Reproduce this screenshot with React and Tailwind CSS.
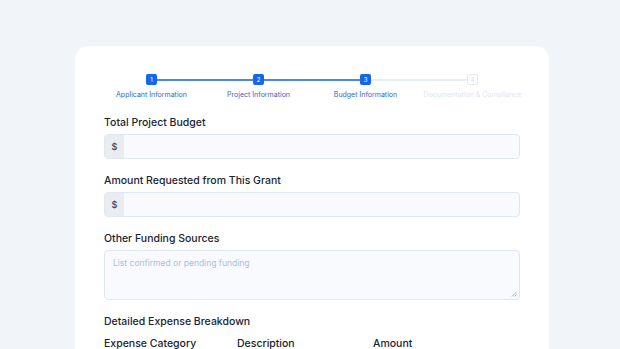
import React from "react";

const steps = [
  { n: 1, label: "Applicant Information", done: true },
  { n: 2, label: "Project Information", done: true },
  { n: 3, label: "Budget Information", done: true },
  { n: 4, label: "Documentation & Compliance", done: false },
];

function Stepper() {
  return (
    <div className="grid grid-cols-4 px-[23px]">
      {steps.map((s, i) => {
        const next = steps[i + 1];
        return (
          <div key={s.n} className="relative flex flex-col items-center">
            {next && (
              <div
                className={
                  "absolute left-1/2 top-[5px] h-[2px] w-full " +
                  (next.done ? "bg-[#4b86ea]" : "bg-[#e6edf8]")
                }
              />
            )}
            <div
              className={
                "relative z-10 flex h-[11px] w-[11px] items-center justify-center rounded-[2px] text-[6px] leading-none " +
                (s.done
                  ? "bg-[#1467ea] text-white"
                  : "border border-[#e3e9f3] bg-white text-[#d8e0ee]")
              }
            >
              {s.n}
            </div>
            <div
              className={
                "mt-[5px] whitespace-nowrap text-[7px] leading-[10px] " +
                (s.done ? "text-[#3566c8]" : "text-[#dde5f2]")
              }
            >
              {s.label}
            </div>
          </div>
        );
      })}
    </div>
  );
}

function Label({ children }) {
  return <div className="text-[10.5px] font-medium leading-[14px] text-[#1b2430]">{children}</div>;
}

function MoneyInput() {
  return (
    <div className="mt-[4px] flex h-[25px] overflow-hidden rounded-[4px] border border-[#dfe7f2] bg-[#f8fafd]">
      <div className="flex w-[19px] items-center justify-center bg-[#e9ecf0] text-[9px] font-semibold text-[#4a4f57]">
        $
      </div>
      <div className="flex-1" />
    </div>
  );
}

export default function App() {
  return (
    <div
      className="h-[349px] w-[620px] overflow-hidden bg-[#f1f5fa] pt-[46px]"
      style={{ fontFamily: "Inter, 'Noto Sans', sans-serif" }}
    >
      <div className="ml-[75px] h-[340px] w-[474px] rounded-[14px] bg-white pt-[28px]">
        <Stepper />
        <div className="px-[29px]">
          <div className="mt-[16px]">
            <Label>Total Project Budget</Label>
            <MoneyInput />
          </div>
          <div className="mt-[15px]">
            <Label>Amount Requested from This Grant</Label>
            <MoneyInput />
          </div>
          <div className="mt-[15px]">
            <Label>Other Funding Sources</Label>
            <div className="relative mt-[4px] h-[50px] rounded-[4px] border border-[#dfe7f2] bg-[#f8fafd] px-[8px] pt-[6px] text-[8.5px] leading-[12px] text-[#a6c0e8]">
              List confirmed or pending funding
              <svg className="absolute bottom-[2px] right-[2px]" width="6" height="6" viewBox="0 0 6 6">
                <path d="M5.5 1 L1 5.5 M5.5 3.5 L3.5 5.5" stroke="#9aa3ae" strokeWidth="0.8" />
              </svg>
            </div>
          </div>
          <div className="mt-[15px]">
            <Label>Detailed Expense Breakdown</Label>
          </div>
          <div className="mt-[8px] grid grid-cols-[133px_136px_1fr] text-[10.5px] font-medium leading-[14px] text-[#1b2430]">
            <div>Expense Category</div>
            <div>Description</div>
            <div>Amount</div>
          </div>
        </div>
      </div>
    </div>
  );
}
